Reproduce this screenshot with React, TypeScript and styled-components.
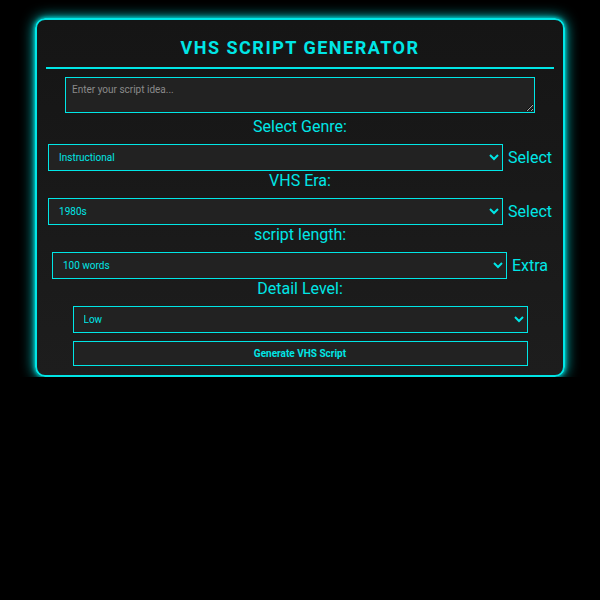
import React, { useState } from "react";
import styled, { createGlobalStyle } from "styled-components";

const neon = "#00e6e6";

const GlobalStyle = createGlobalStyle`
  html, body {
    margin: 0;
    padding: 0;
    background: #000;
  }
  body {
    font-family: Roboto, "Liberation Sans", sans-serif;
    color: ${neon};
  }
`;

const Card = styled.div`
  box-sizing: border-box;
  width: 530px;
  margin: 18px auto 0;
  padding: 10px 9px 9px;
  border: 2px solid ${neon};
  border-radius: 10px;
  background: linear-gradient(180deg, #151515 0%, #1d1d1d 100%);
  box-shadow: 0 0 14px ${neon}, 0 0 4px ${neon};
  display: flex;
  flex-direction: column;
  align-items: center;
`;

const Title = styled.h1`
  align-self: stretch;
  margin: 7px 0 0;
  padding-bottom: 9px;
  border-bottom: 2px solid ${neon};
  text-align: center;
  font-size: 18px;
  font-weight: 700;
  letter-spacing: 1.5px;
  line-height: 21px;
`;

const Idea = styled.textarea`
  box-sizing: border-box;
  width: 470px;
  height: 36px;
  margin: 8px 0 4px;
  padding: 6px;
  background: #222;
  border: 1px solid ${neon};
  color: ${neon};
  font-family: Roboto, "Liberation Sans", sans-serif;
  font-size: 10px;
  outline: none;
  &::placeholder {
    color: #8a8a8a;
  }
`;

const Label = styled.label`
  font-size: 16px;
  line-height: 19px;
  margin-bottom: 8px;
`;

const Row = styled.div`
  display: flex;
  align-items: center;
  gap: 5px;
`;

const Select = styled.select`
  box-sizing: border-box;
  width: 455px;
  height: 27px;
  padding: 0 6px;
  background: #222;
  border: 1px solid ${neon};
  border-radius: 0;
  color: ${neon};
  font-family: Roboto, "Liberation Sans", sans-serif;
  font-size: 10px;
  outline: none;
`;

const Side = styled.span`
  font-size: 16px;
  line-height: 19px;
`;

const Button = styled.button`
  box-sizing: border-box;
  width: 455px;
  height: 25px;
  margin-top: 8px;
  background: #222;
  border: 1px solid ${neon};
  color: ${neon};
  font-family: Roboto, "Liberation Sans", sans-serif;
  font-size: 10px;
  font-weight: 700;
  cursor: pointer;
`;

type Field = {
  label: string;
  options: string[];
  side?: string;
};

const fields: Field[] = [
  {
    label: "Select Genre:",
    options: ["Instructional", "Horror", "Sci-Fi", "Comedy", "Infomercial"],
    side: "Select",
  },
  {
    label: "VHS Era:",
    options: ["1980s", "1990s", "Early 2000s"],
    side: "Select",
  },
  {
    label: "script length:",
    options: ["100 words", "250 words", "500 words"],
    side: "Extra",
  },
  {
    label: "Detail Level:",
    options: ["Low", "Medium", "High"],
  },
];

const App = () => {
  const [idea, setIdea] = useState("");

  return (
    <>
      <GlobalStyle />
      <Card>
        <Title>VHS SCRIPT GENERATOR</Title>
        <Idea
          placeholder="Enter your script idea..."
          value={idea}
          onChange={(e) => setIdea(e.target.value)}
        />
        {fields.map((f) => (
          <React.Fragment key={f.label}>
            <Label>{f.label}</Label>
            <Row>
              <Select defaultValue={f.options[0]}>
                {f.options.map((o) => (
                  <option key={o}>{o}</option>
                ))}
              </Select>
              {f.side && <Side>{f.side}</Side>}
            </Row>
          </React.Fragment>
        ))}
        <Button>Generate VHS Script</Button>
      </Card>
    </>
  );
};

export default App;
